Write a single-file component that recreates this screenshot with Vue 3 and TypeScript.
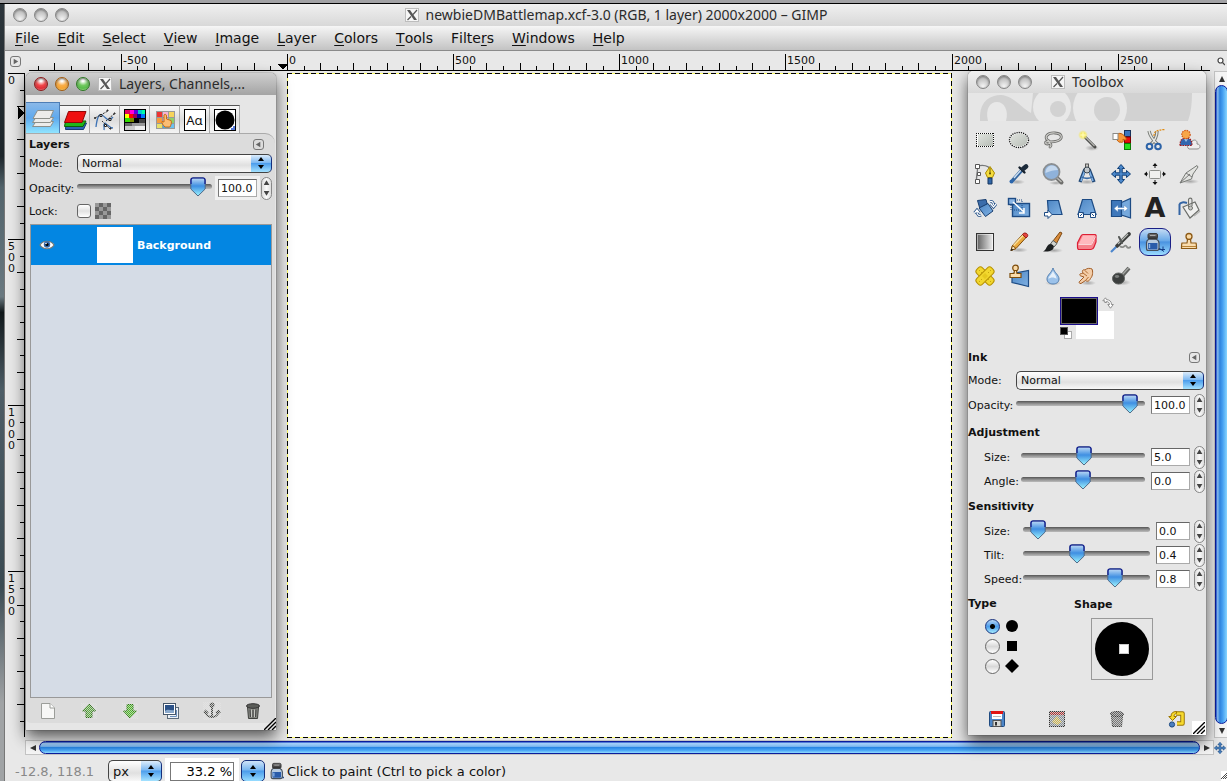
<script setup lang="ts">
import { computed, reactive, ref } from 'vue'

interface MenuEntry { before: string; key: string; after: string }
interface Tick { pos: number; size: 'major' | 'medium' | 'minor'; label: string }
interface SliderRow { id: string; label: string; text: string; position: number }

const menus: MenuEntry[] = [
  { before: '', key: 'F', after: 'ile' },
  { before: '', key: 'E', after: 'dit' },
  { before: '', key: 'S', after: 'elect' },
  { before: '', key: 'V', after: 'iew' },
  { before: '', key: 'I', after: 'mage' },
  { before: '', key: 'L', after: 'ayer' },
  { before: '', key: 'C', after: 'olors' },
  { before: '', key: 'T', after: 'ools' },
  { before: 'Filte', key: 'r', after: 's' },
  { before: '', key: 'W', after: 'indows' },
  { before: '', key: 'H', after: 'elp' },
]

const zoom = 0.3323

function makeTicks(origin: number, from: number, to: number): Tick[] {
  const ticks: Tick[] = []
  for (let unit = from; unit <= to; unit += 50) {
    const size = unit % 500 === 0 ? 'major' : unit % 100 === 0 ? 'medium' : 'minor'
    ticks.push({ pos: Math.round(origin + unit * zoom), size, label: size === 'major' ? String(unit) : '' })
  }
  return ticks
}

const horizontalTicks = computed(() => makeTicks(262, -750, 2750))
const verticalTicks = computed(() => makeTicks(2, 0, 1950))
const tickLength = { major: 17, medium: 8, minor: 5 }

const tabs = ['layers', 'channels', 'paths', 'colormap', 'palette', 'fonts', 'brushes']
const tabNames = ['Layers', 'Channels', 'Paths', 'Colormap', 'Palettes', 'Fonts', 'Brushes']
const activeTab = ref('layers')

const tools = [
  'rect-select', 'ellipse-select', 'lasso', 'wand', 'by-color', 'scissors', 'foreground',
  'path', 'picker', 'magnify', 'measure', 'move', 'align', 'crop',
  'rotate', 'scale', 'shear', 'perspective', 'flip', 'text', 'bucket',
  'gradient', 'pencil', 'brush', 'eraser', 'airbrush', 'ink', 'clone',
  'heal', 'perspective-clone', 'blur', 'smudge', 'dodge',
]
const activeTool = ref('ink')

const layerActions = ['new', 'raise', 'lower', 'duplicate', 'anchor', 'trash']
const presetActions = ['save', 'restore', 'delete', 'reset']

const layerOpacity = reactive<SliderRow>({ id: 'layer-opacity', label: 'Opacity:', text: '100.0', position: 95 })
const inkOpacity = reactive<SliderRow>({ id: 'ink-opacity', label: 'Opacity:', text: '100.0', position: 94 })
const adjustment = reactive<SliderRow[]>([
  { id: 'adjust-size', label: 'Size:', text: '5.0', position: 51 },
  { id: 'adjust-angle', label: 'Angle:', text: '0.0', position: 50 },
])
const sensitivity = reactive<SliderRow[]>([
  { id: 'sense-size', label: 'Size:', text: '0.0', position: 6 },
  { id: 'sense-tilt', label: 'Tilt:', text: '0.4', position: 41 },
  { id: 'sense-speed', label: 'Speed:', text: '0.8', position: 76 },
])

const blob = ref('circle')
const lockAlpha = ref(false)
const zoomText = ref('33.2 %')
</script>

<template>
  <svg class="sprite" aria-hidden="true">
    <defs>
      <linearGradient id="g-blue" x1="0" y1="0" x2="1" y2="1">
        <stop offset="0" stop-color="#4d86c4" /><stop offset="1" stop-color="#7fb0e2" />
      </linearGradient>
      <linearGradient id="g-gray" x1="0" y1="0" x2="1" y2="0">
        <stop offset="0" stop-color="#5c5c5c" /><stop offset="1" stop-color="#f2f2f2" />
      </linearGradient>
      <linearGradient id="g-sel" x1="0" y1="0" x2="1" y2="1">
        <stop offset="0" stop-color="#e2e5e0" /><stop offset="1" stop-color="#b6bcb5" />
      </linearGradient>
      <linearGradient id="g-ink" x1="0" y1="0" x2="0" y2="1">
        <stop offset="0" stop-color="#777" /><stop offset="1" stop-color="#2a2a2a" />
      </linearGradient>
      <radialGradient id="g-glow">
        <stop offset="0" stop-color="#fffbd0" /><stop offset=".45" stop-color="#f6ea66" /><stop offset="1" stop-color="#f6ea66" stop-opacity="0" />
      </radialGradient>
      <radialGradient id="g-shade">
        <stop offset="0" stop-color="#000" stop-opacity=".28" /><stop offset="1" stop-color="#000" stop-opacity="0" />
      </radialGradient>
      <pattern id="p-mesh" width="2" height="2" patternUnits="userSpaceOnUse">
        <rect width="1" height="1" fill="#e4e4e4" /><rect x="1" y="1" width="1" height="1" fill="#e4e4e4" />
      </pattern>
    </defs>

    <symbol id="t-rect-select" viewBox="0 0 24 24">
      <rect x="4" y="5" width="17" height="14" fill="#fff" />
      <rect x="5" y="6" width="15" height="12" fill="url(#g-sel)" />
      <path d="M3 5.500H21M3 18.500H21" stroke="#111" stroke-dasharray="1 1" />
      <path d="M3.500 5V19M20.500 5V19" stroke="#111" stroke-dasharray="1 1" />
    </symbol>
    <symbol id="t-ellipse-select" viewBox="0 0 24 24">
      <ellipse cx="12" cy="12" rx="9" ry="7" fill="url(#g-sel)" stroke="#fff" />
      <ellipse cx="12" cy="12" rx="9.500" ry="7.500" fill="none" stroke="#111" stroke-width="1.300" stroke-dasharray="1.200 1" />
    </symbol>
    <symbol id="t-lasso" viewBox="0 0 24 24">
      <g fill="none" stroke-linecap="round">
        <path d="M8 13C2 10 6 4.500 14 5C22 5.500 22 11 16 13C12 14.300 9 14 6.500 13.500C4 13.500 4 16 6.500 16C9 16 9 13 7 12.500M8 15C11 16 10 18 9 19" stroke="#6b6b69" stroke-width="2.800" />
        <path d="M8 13C2 10 6 4.500 14 5C22 5.500 22 11 16 13C12 14.300 9 14 6.500 13.500C4 13.500 4 16 6.500 16C9 16 9 13 7 12.500M8 15C11 16 10 18 9 19" stroke="#cfcfcb" stroke-width="1.200" />
      </g>
    </symbol>
    <symbol id="t-wand" viewBox="0 0 24 24">
      <ellipse cx="17" cy="20" rx="7" ry="3" fill="url(#g-shade)" />
      <path d="M10 9L20 19" stroke="#4a4b49" stroke-width="3" stroke-linecap="round" />
      <path d="M10 8.500L19.500 18" stroke="#b5b5b0" stroke-width="1.200" />
      <circle cx="8" cy="7" r="5" fill="url(#g-glow)" />
      <path d="M8 4V10M5 7H11" stroke="#fff9a8" />
    </symbol>
    <symbol id="t-by-color" viewBox="0 0 24 24">
      <rect x="15.500" y="2.500" width="6" height="6" fill="#3c76bd" stroke="#16325c" />
      <rect x="15.500" y="9" width="6" height="6" fill="#e80d0d" stroke="#7c0000" />
      <rect x="15.500" y="15.500" width="6" height="6" fill="#27e11f" stroke="#0b7a06" />
      <path d="M8 6C12 4 15 7 17 10C18 12 16 13 14 11C15 14 13 15 12 14C10 15 9 13 8 12Z" fill="#f79a3c" stroke="#bf5a08" />
      <rect x="4" y="5.500" width="5" height="6" fill="#fff" stroke="#8a8a86" />
    </symbol>
    <symbol id="t-scissors" viewBox="0 0 24 24">
      <path d="M6 3C7 8 10 12 15 17M14 3C14 8 12 13 7 17" fill="none" stroke="#777a75" stroke-width="3.400" />
      <path d="M6 3C7 8 10 12 15 17M14 3C14 8 12 13 7 17" fill="none" stroke="#e6e7e3" stroke-width="1.400" />
      <ellipse cx="6.500" cy="18.500" rx="2.800" ry="2.800" fill="#e7e7e7" stroke="#2d63a7" stroke-width="2" />
      <ellipse cx="15" cy="18.500" rx="2.800" ry="2.800" fill="#e7e7e7" stroke="#2d63a7" stroke-width="2" />
      <path d="M11 8C11 3 14 2 22 1.500" fill="none" stroke="#e08a10" stroke-dasharray="2 1" stroke-width="1.200" />
    </symbol>
    <symbol id="t-foreground" viewBox="0 0 24 24">
      <path d="M12 21C9 19 11 15 14 15C16 10 21 12 20 16C24 16 24 21 20 21Z" fill="#eee" stroke="#8d8d8d" />
      <path d="M3 17.500C3 12 5 10 9 10C13 10 15 12 15 17.500Z" fill="#3266ae" stroke="#a51818" stroke-dasharray="1.500 1" stroke-width="1.200" />
      <path d="M7 11L9 14L11 11Z" fill="#9bc0ea" />
      <circle cx="9" cy="6.500" r="4.200" fill="#f7a648" stroke="#d0591c" stroke-dasharray="1.500 1" stroke-width="1.200" />
    </symbol>
    <symbol id="t-path" viewBox="0 0 24 24">
      <path d="M4 20C2 14 6 10 4 4C9 3 16 2 18 9" fill="none" stroke="#76787a" stroke-width="1.400" />
      <path d="M2.500 2.500h4v4h-4zM2.500 17.500h4v4h-4zM4.500 10.500h3v3h-3z" fill="#fff" stroke="#555" />
      <path d="M17 4.500L21.500 11L19.500 15.500H14.500L12.500 11Z" fill="#f5dd3e" stroke="#a98a05" />
      <path d="M17 6V11" stroke="#7e6700" /><circle cx="17" cy="11.500" r="1" fill="#5a4a00" />
      <path d="M15 16h4v6h-4z" fill="#3167a8" stroke="#17375f" />
    </symbol>
    <symbol id="t-picker" viewBox="0 0 24 24">
      <ellipse cx="10" cy="20" rx="8" ry="2.500" fill="url(#g-shade)" />
      <path d="M14 9L6 18" stroke="#34669f" stroke-width="3.600" stroke-linecap="round" />
      <path d="M14 8L7 16" stroke="#cfe0f2" stroke-width="1.400" />
      <circle cx="4.500" cy="19.500" r="2" fill="#2b66ad" />
      <path d="M12.500 5.500L17.500 10.500" stroke="#15202c" stroke-width="2.400" stroke-linecap="round" />
      <path d="M16 7L19 4.500" stroke="#1c2b3b" stroke-width="4.800" stroke-linecap="round" />
    </symbol>
    <symbol id="t-magnify" viewBox="0 0 24 24">
      <ellipse cx="15" cy="21" rx="7" ry="2" fill="url(#g-shade)" />
      <path d="M16 16L20.500 20.500" stroke="#6e6e6c" stroke-width="4" stroke-linecap="round" />
      <path d="M16 16L20.500 20" stroke="#bdbdb9" stroke-width="1.400" />
      <circle cx="10.500" cy="10" r="8" fill="#8fb2da" stroke="#8b8f92" stroke-width="1.800" />
      <path d="M4.500 11C4.500 2.500 14.500 1 17 8C13 8 9 9 4.500 11Z" fill="#c4d8ee" />
    </symbol>
    <symbol id="t-measure" viewBox="0 0 24 24">
      <ellipse cx="12" cy="20" rx="9" ry="2.500" fill="url(#g-shade)" />
      <path d="M10 7L5 20M14 7L19 20" stroke="#1f4878" stroke-width="3.400" />
      <path d="M10 8L6 19M14 8L18 19" stroke="#7fb1e6" stroke-width="1.600" />
      <path d="M6 14.500C9 17 15 17 18 14.500" fill="none" stroke="#3b6ca5" stroke-width="1.600" />
      <rect x="10.500" y="2" width="3" height="4" fill="#c9c9c5" stroke="#555" />
      <circle cx="12" cy="8" r="3" fill="#c2c8cd" stroke="#39454f" />
    </symbol>
    <symbol id="t-move" viewBox="0 0 24 24">
      <path d="M12 2.500L15.500 6.500H13.200V10.800H17.500V8.500L21.500 12L17.500 15.500V13.200H13.200V17.500H15.500L12 21.500L8.500 17.500H10.800V13.200H6.500V15.500L2.500 12L6.500 8.500V10.800H10.800V6.500H8.500Z" fill="#4b88cb" stroke="#0f3f78" />
    </symbol>
    <symbol id="t-align" viewBox="0 0 24 24">
      <rect x="6.500" y="8.500" width="11" height="8" rx="1" fill="#f0f0ee" stroke="#8d8f8b" />
      <path d="M12 1L14.500 4H12.500V6H11.500V4H9.500ZM12 23L14.500 20H12.500V18H11.500V20H9.500ZM1 12L4 9.500V11.500H5V12.500H4V14.500ZM23 12L20 9.500V11.500H19V12.500H20V14.500Z" fill="#111" />
    </symbol>
    <symbol id="t-crop" viewBox="0 0 24 24">
      <ellipse cx="13" cy="19.500" rx="9" ry="2.500" fill="url(#g-shade)" />
      <path d="M3 21L9 11L20 3.500L21 5L16 12L14.500 17Z" fill="#e3e4e1" stroke="#787b77" />
      <path d="M3 21L13 12M9 11L15 15" stroke="#777" fill="none" />
    </symbol>
    <symbol id="t-rotate" viewBox="0 0 24 24">
      <path d="M4.500 4.500L13 3.500L15 11L7 13Z" fill="#3b6dab" stroke="#173d6e" />
      <path d="M6 12L15 7.500L20 15L12.500 20.500Z" fill="url(#g-blue)" stroke="#173d6e" />
      <path d="M17 5.500C19 5 20.500 6 20.500 9M23 8L20.500 11L18 8M8 19C6 20 4 19 4 16M1.500 17L4 14L6.500 17" fill="none" stroke="#1d4b84" stroke-width="2.800" />
      <path d="M17 5.500C19 5 20.500 6 20.500 9M23 8L20.500 11L18 8M8 19C6 20 4 19 4 16M1.500 17L4 14L6.500 17" fill="none" stroke="#fff" stroke-width="1.200" />
    </symbol>
    <symbol id="t-scale" viewBox="0 0 24 24">
      <rect x="5.500" y="7.500" width="17" height="13" fill="url(#g-blue)" stroke="#1d4b84" stroke-width="1.400" />
      <rect x="1.500" y="2.500" width="7" height="6" fill="#8ab5e4" stroke="#1d4b84" stroke-width="1.400" />
      <path d="M8 4H15V8M15 9V14H4V9" fill="none" stroke="#1d4b84" stroke-dasharray="1 1" />
      <path d="M6 6L17 16M17 12V17H12" fill="none" stroke="#fff" stroke-width="1.500" />
    </symbol>
    <symbol id="t-shear" viewBox="0 0 24 24">
      <path d="M6.500 4.500H17.500L21 18.500H7.500Z" fill="url(#g-blue)" stroke="#1d4b84" stroke-width="1.200" />
      <path d="M3.500 16.500H7V14L11 18.500L7 22.500V20H3.500Z" fill="#fff" stroke="#1d4b84" />
    </symbol>
    <symbol id="t-perspective" viewBox="0 0 24 24">
      <path d="M7.500 3.500H16.500L21 18.500H3Z" fill="url(#g-blue)" stroke="#1d4b84" stroke-width="1.200" />
      <path d="M3.500 16.500H8.500V21.500H3.500ZM15.500 16.500H20.500V21.500H15.500Z" fill="#fff" stroke="#1d4b84" />
      <path d="M5 20L7.500 17.500M19 20L16.500 17.500" fill="none" stroke="#1d4b84" />
    </symbol>
    <symbol id="t-flip" viewBox="0 0 24 24">
      <path d="M2.500 4.500H12.500V20.500H2.500Z" fill="#3f78bb" stroke="#1d4b84" stroke-width="1.200" />
      <path d="M12.500 6.500L21.500 2.500V22L12.500 19Z" fill="#76a9dd" stroke="#1d4b84" stroke-width="1.200" />
      <path d="M5 12.500L9 9V11.500H15V9L19 12.500L15 16V13.500H9V16Z" fill="#fff" stroke="#5a8bc4" stroke-width=".6" />
    </symbol>
    <symbol id="t-bucket" viewBox="0 0 24 24">
      <path d="M2.500 19V8.500C3 6 7 6 10 7" fill="none" stroke="#3465a4" stroke-width="2" />
      <path d="M6 11L18 6L22 14L13 22Z" fill="#f0f0ef" stroke="#6b6d69" stroke-width="1.200" />
      <path d="M11.500 11V4C11.500 1.500 15 1.500 15 4V10" fill="none" stroke="#6f716d" stroke-width="1.100" />
      <circle cx="13.500" cy="12" r="2" fill="#c5c6c3" stroke="#70736e" />
      <path d="M17 20L23 15" stroke="#b3b3b1" stroke-width="1.600" />
    </symbol>
    <symbol id="t-gradient" viewBox="0 0 24 24">
      <rect x="3.500" y="3.500" width="17" height="17" fill="url(#g-gray)" stroke="#333" />
      <rect x="4.500" y="4.500" width="15" height="15" fill="none" stroke="#fff" stroke-opacity=".5" />
    </symbol>
    <symbol id="t-pencil" viewBox="0 0 24 24">
      <ellipse cx="12" cy="20" rx="9" ry="2.500" fill="url(#g-shade)" />
      <path d="M4 20.500L5.500 15.500L16 4L19.500 7L9 18.500Z" fill="#e9a93f" stroke="#7e4a08" />
      <path d="M6.500 15.500L17 4.500" stroke="#fbe09b" stroke-width="1.400" />
      <path d="M15.500 4.500C17 1.500 22 3.500 20.500 6.500L19 8Z" fill="#e2453f" stroke="#962019" />
      <path d="M4 20.500L5.500 15.500L9 18.500Z" fill="#f3e3bd" stroke="#7e4a08" /><path d="M3.500 21L4.500 18.500L6.500 19.800Z" fill="#222" />
    </symbol>
    <symbol id="t-brush" viewBox="0 0 24 24">
      <ellipse cx="13" cy="20.500" rx="9" ry="2.500" fill="url(#g-shade)" />
      <path d="M12 11L19 2L21 3L15.500 13.500Z" fill="#d98b3a" stroke="#7b4712" />
      <path d="M9.500 14L12 10.500L16 13.500L13 17Z" fill="#d0d3cf" stroke="#5c5f5b" />
      <path d="M2 21.500C6 20 5 15 9 14C13 14 14 18 11 20C8 22 5 21.500 2 21.500Z" fill="#1c1f20" />
    </symbol>
    <symbol id="t-eraser" viewBox="0 0 24 24">
      <path d="M8 4.500H20C21 4.500 21.300 5.500 21 7V12L19 17C18.500 18.500 17.500 19.500 16 19.500H4C2.500 19.500 2.500 18.500 2.500 17V13L6 6C6.500 5 7 4.500 8 4.500Z" fill="#f6848d" stroke="#dc1f35" stroke-width="1.200" />
      <path d="M8 5.500H20L16.500 14H3.800Z" fill="#ffb9be" />
      <path d="M3.500 14.500H16.500L20.500 6.500" fill="none" stroke="#f9d6d9" />
    </symbol>
    <symbol id="t-airbrush" viewBox="0 0 24 24">
      <path d="M11 16C14 20 16 13 18 17C19 19 21 17 22 17" fill="none" stroke="#8a8c89" stroke-width="1.800" />
      <path d="M8 16L20 4" stroke="#3b3d3c" stroke-width="3.800" stroke-linecap="round" />
      <path d="M9 14L19 4" stroke="#b7bab6" stroke-width="1.300" />
      <path d="M10 7L13 13" stroke="#555856" stroke-width="2" stroke-linecap="round" />
      <path d="M2 22L7 17" stroke="#4c86cd" stroke-width="2.200" />
    </symbol>
    <symbol id="t-ink" viewBox="0 0 24 24">
      <path d="M13 19.500H22M15 17.500L21 21.500M20 16.500V20" stroke="#143d86" stroke-width="1" />
      <path d="M6 9H13C15 10 16 11.500 16 13V18C16 20 15 20.500 13.500 20.500H5.500C4 20.500 3.500 20 3.500 18V13C3.500 11.500 4 10 6 9Z" fill="#b7cbe0" stroke="#45505c" stroke-width="1.200" />
      <path d="M5 13H14.500V18C14.500 19 14 19.500 13 19.500H6.500C5.500 19.500 5 19 5 18Z" fill="#2a5caa" />
      <path d="M6.500 14V18" stroke="#8fb8e8" stroke-width="1.400" />
      <rect x="5" y="3.500" width="9.500" height="5.500" rx="1.500" fill="url(#g-ink)" stroke="#3b3b3b" />
      <path d="M7 5.500H12.500" stroke="#aaa" />
    </symbol>
    <symbol id="t-clone" viewBox="0 0 24 24">
      <circle cx="12" cy="6.500" r="3" fill="#f8d9a6" stroke="#8d5a16" stroke-width="1.300" />
      <path d="M10.500 9.500H13.500L14 13H19C19.500 14 19.500 17 19.500 18.500H4.500C4.500 17 4.500 14 5 13H10Z" fill="#f9dcae" stroke="#8d5a16" stroke-width="1.200" />
      <path d="M5 16.500H19" stroke="#b88438" />
    </symbol>
    <symbol id="t-heal" viewBox="0 0 24 24">
      <g fill="#f2d72e" stroke="#b79205">
        <rect x="1.500" y="8" width="21" height="8" rx="3" transform="rotate(45 12 12)" />
        <rect x="1.500" y="8" width="21" height="8" rx="3" transform="rotate(-45 12 12)" />
      </g>
      <path d="M9 12L12 9L15 12L12 15Z" fill="#e6c81e" />
      <path d="M6 6.500h1M8 8.500h1M17 6.500h1M15 8.500h1M6 17.500h1M8 15.500h1M17 17.500h1M15 15.500h1" stroke="#c7a710" />
    </symbol>
    <symbol id="t-perspective-clone" viewBox="0 0 24 24">
      <path d="M5 9.500L21.500 6.500V22.500L5 18.500Z" fill="url(#g-blue)" stroke="#1d4b84" stroke-width="1.200" />
      <circle cx="8.500" cy="4" r="2.800" fill="#f8d9a6" stroke="#7d4c0b" stroke-width="1.200" />
      <path d="M7.500 6.500H9.500L10 9.500H14V13.500H3V9.500H7Z" fill="#f9dcae" stroke="#7d4c0b" stroke-width="1.200" />
    </symbol>
    <symbol id="t-blur" viewBox="0 0 24 24">
      <ellipse cx="12" cy="19" rx="8" ry="2.500" fill="url(#g-shade)" />
      <path d="M12 4C13.500 9 18 11 18 15C18 18 15.500 20 12 20C8.500 20 6 18 6 15C6 11 10.500 9 12 4Z" fill="#9cc2ea" stroke="#5580b0" />
      <path d="M12 7C10.500 11 7.500 12 7.500 15C9.500 13 13.500 13 15.500 15C15.500 11 13 10 12 7Z" fill="#e6f0fa" />
    </symbol>
    <symbol id="t-smudge" viewBox="0 0 24 24">
      <ellipse cx="13" cy="19" rx="8" ry="2.500" fill="url(#g-shade)" />
      <path d="M17 5C18 7 18 12 15.500 14.500C14 18 11.500 17.500 10.500 16.500L6 19.500C4 20 3.500 18 5 17L9 13L6 12C4 11.500 4.500 9.500 6.500 9.500L8 9C6.500 7 8 5 10 6C12 4 15 4 17 5Z" fill="#f3cda8" stroke="#a25c25" />
      <path d="M10 6.500L13 9.500M8 9L12 12M10.500 16.500L13.500 13" stroke="#b06a30" fill="none" />
    </symbol>
    <symbol id="t-dodge" viewBox="0 0 24 24">
      <ellipse cx="13" cy="18.500" rx="9" ry="3" fill="url(#g-shade)" />
      <path d="M13 12L20 4" stroke="#60625f" stroke-width="4" /><path d="M13 11L19.500 4" stroke="#a5a7a4" stroke-width="1.300" />
      <ellipse cx="9.500" cy="14.500" rx="6" ry="5.500" fill="#3b3e3d" stroke="#5d605e" />
      <ellipse cx="8" cy="12.500" rx="2.200" ry="1.400" fill="#7a7d7b" />
    </symbol>

    <symbol id="b-layers" viewBox="0 0 24 24">
      <g fill="#ececea" stroke="#8c8f8a">
        <path d="M5 15.500H22.500L19.500 20.500H1.500Z" /><path d="M5 11.500H22.500L19.500 16.500H1.500Z" /><path d="M6.500 4.500H22.500L19 12.500H2Z" />
      </g>
    </symbol>
    <symbol id="b-channels" viewBox="0 0 24 24">
      <path d="M3 15H23.500L20.500 21.500H2.500Z" fill="#2d64b4" stroke="#163c75" />
      <path d="M2.500 13H23L20 18.500H1.500Z" fill="#1fb71b" stroke="#0a5f08" />
      <path d="M5.500 3.500H23L19 14.500H1.500Z" fill="#ef1010" stroke="#8f0505" />
    </symbol>
    <symbol id="b-paths" viewBox="0 0 24 24">
      <path d="M3 19C4 10 6 5 9 7C14 10 15 15 20 9M11 22C12 18 9 17 12 15C15 17 17 20 20 20" fill="none" stroke="#3f74b6" stroke-width="1.300" />
      <path d="M2 10L15 3M13 13L21 6M9 13L17 21" stroke="#333" stroke-dasharray="2 1" />
      <path d="M1.500 9.500h1v1h-1zM14 2h1v1h-1zM7 6.500h2v2h-2zM16 10.500h2v2h-2zM21 5h1v1h-1zM11.500 16.500h2v2h-2zM17 20h1v1h-1z" fill="#fff" stroke="#222" />
    </symbol>
    <symbol id="b-colormap" viewBox="0 0 24 24">
      <rect x="1" y="1" width="22" height="22" fill="#000" />
      <path d="M2 2h5v4h-5z" fill="#e10061" /><path d="M7 2h4v4h-4z" fill="#f0d" /><path d="M11 2h4v4h-4z" fill="#5a00e0" /><path d="M15 2h4v4h-4z" fill="#0cc" /><path d="M19 2h3v4h-3z" fill="#0fa" />
      <path d="M2 6h4v4h-4z" fill="#ff0" /><path d="M6 6h4v4h-4z" fill="#f00" /><path d="M10 6h4v4h-4z" fill="#905" /><path d="M14 6h4v4h-4z" fill="#009" /><path d="M18 6h4v4h-4z" fill="#07f" />
      <path d="M2 10h5v4h-5z" fill="#3d0" /><path d="M7 10h4v4h-4z" fill="#780" /><path d="M16 11h6v4h-6z" fill="#444" />
      <path d="M2 15h7v3h-7z" fill="#666" /><path d="M9 15h13v3h-13z" fill="#999" /><path d="M2 18h10v4h-10z" fill="#ccc" /><path d="M12 18h10v4h-10z" fill="#eee" />
    </symbol>
    <symbol id="b-palette" viewBox="0 0 24 24">
      <rect x="3" y="3" width="19" height="18" fill="#999" />
      <path d="M4 4h5v5h-5z" fill="#e33" /><path d="M10 4h5v5h-5z" fill="#f7b3d4" /><path d="M16 4h5v5h-5z" fill="#f7d45a" />
      <path d="M4 10h5v5h-5z" fill="#f79a3c" /><path d="M10 10h5v5h-5z" fill="#c9a0dc" /><path d="M16 10h5v5h-5z" fill="#8fd16a" />
      <path d="M4 16h5v4h-5z" fill="#e7e06a" /><path d="M10 16h5v4h-5z" fill="#4aa8e0" /><path d="M16 16h5v4h-5z" fill="#6cc0f0" />
      <path d="M11 7C12 5.500 13.500 6.500 13.500 8V11L18 12.500C19 14 18 17 17 19H12C10 17 8.500 15 9 13.500L11 14Z" fill="#fbbd74" stroke="#c76d10" />
    </symbol>
    <symbol id="b-brushes" viewBox="0 0 24 24">
      <rect x="1" y="1" width="22" height="22" fill="#000" /><rect x="2" y="2" width="20" height="20" fill="#fff" />
      <circle cx="12" cy="12" r="9.500" fill="#000" />
      <path d="M18 22V20H20V18H22V22Z" fill="#5277d8" />
    </symbol>

    <symbol id="a-new" viewBox="0 0 18 18">
      <path d="M2.500 1.500H11L15.500 6V16.500H2.500Z" fill="#f7f7f6" stroke="#9b9d99" /><path d="M11 1.500V6H15.500" fill="#fff" stroke="#9b9d99" />
    </symbol>
    <symbol id="a-raise" viewBox="0 0 18 18">
      <path d="M9 2L15.500 9H12V15.500H6V9H2.500Z" fill="#59a63d" stroke="#2c6a17" /><rect x="1" y="1" width="16" height="16" fill="url(#p-mesh)" opacity=".75" />
    </symbol>
    <symbol id="a-lower" viewBox="0 0 18 18">
      <path d="M9 16L15.500 9H12V2.500H6V9H2.500Z" fill="#4fb52a" stroke="#2c7a12" /><rect x="1" y="1" width="16" height="16" fill="url(#p-mesh)" opacity=".7" />
    </symbol>
    <symbol id="a-duplicate" viewBox="0 0 18 18">
      <rect x="5.500" y="5.500" width="11" height="11" fill="#eef2f6" stroke="#5c6b7a" />
      <rect x="1.500" y="1.500" width="12" height="11" fill="#fff" stroke="#45566a" />
      <rect x="3" y="3" width="9" height="8" fill="#2c5288" /><path d="M3 9C6 6 9 9 12 8V11H3Z" fill="#8aa9cc" />
      <path d="M8 14.500H14.500V8" fill="none" stroke="#6a8fbd" />
    </symbol>
    <symbol id="a-anchor" viewBox="0 0 18 18">
      <g fill="none" stroke="#4a4c49" stroke-width="2"><circle cx="9" cy="3" r="1.500" /><path d="M9 5V15M2.500 9C2.500 17 15.500 17 15.500 9M1 11L2.500 9L5 11M17 11L15.500 9L13 11" /></g>
      <rect width="18" height="18" fill="url(#p-mesh)" opacity=".8" />
    </symbol>
    <symbol id="a-trash" viewBox="0 0 18 18">
      <path d="M3.500 5H14.500L13.500 16.500H4.500Z" fill="#858782" stroke="#3f413e" /><ellipse cx="9" cy="4" rx="6.500" ry="2.300" fill="#5b5d59" stroke="#333" />
      <path d="M6 7.500L6.500 15M9 8V15.500M12 7.500L11.500 15" stroke="#444" /><path d="M7.500 7.500V15M10.500 7.500V15" stroke="#c4c6c1" />
    </symbol>
    <symbol id="a-save" viewBox="0 0 18 18">
      <rect x="1.500" y="1.500" width="15" height="15" rx="1" fill="#4d86c8" stroke="#1f4a80" /><rect x="4" y="3" width="10" height="6" fill="#fff" /><rect x="3" y="1" width="12" height="3" fill="#e01515" />
      <path d="M5 6.500H13" stroke="#bbb" /><rect x="5" y="10.500" width="8" height="6" fill="#d8dad7" stroke="#555" /><rect x="7" y="12" width="2" height="3.500" fill="#333" />
    </symbol>
    <symbol id="a-restore" viewBox="0 0 18 18">
      <rect x="1.500" y="1.500" width="15" height="15" fill="#858d96" stroke="#333" /><rect x="2" y="2" width="14" height="3" fill="#a33" />
      <path d="M4 12L9 6L14 12L9 15Z" fill="#c9b24d" /><rect x="1" y="1" width="16" height="16" fill="url(#p-mesh)" opacity=".8" />
    </symbol>
    <symbol id="a-delete" viewBox="0 0 18 18">
      <path d="M3.500 5H14.500L13.500 16.500H4.500Z" fill="#777" stroke="#3f413e" /><ellipse cx="9" cy="4" rx="6.500" ry="2.500" fill="#666" stroke="#333" />
      <rect x="1" y="1" width="16" height="16" fill="url(#p-mesh)" opacity=".7" />
    </symbol>
    <symbol id="a-reset" viewBox="0 0 18 18">
      <path d="M8 3.500H14.500V13.500H9" fill="none" stroke="#9a7500" stroke-width="4.500" stroke-linejoin="round" /><path d="M8 3.500H14.500V13.500H9" fill="none" stroke="#f7da2e" stroke-width="2.600" stroke-linejoin="round" />
      <path d="M8.500 1.500V3.500C6.500 4 6 5 6 6.500H8.500L4.500 10.500L.8 6.500H3C3 3 5 1.500 8.500 1.500Z" fill="#f7da2e" stroke="#9a7500" />
      <circle cx="4" cy="14.500" r="2.600" fill="#4c7fc0" stroke="#1f4a80" />
    </symbol>

    <symbol id="x-logo" viewBox="0 0 14 14">
      <rect x=".5" y=".5" width="13" height="13" fill="#f6f6f6" stroke="#bdbdbd" />
      <path d="M2 2H5L12 12H9Z" fill="#555" /><path d="M12 2L8 6.500M6 8.500L2.500 12" stroke="#555" stroke-width="1.200" />
    </symbol>
    <symbol id="grip" viewBox="0 0 12 12">
      <path d="M0 12L12 0M4 12L12 4M8 12L12 8" stroke="#000" stroke-width="1.400" />
    </symbol>
  </svg>

  <div class="desktop">
    <main class="image-window">
      <header class="titlebar main-title">
        <div class="lights"><button type="button" aria-label="Close"></button><button type="button" aria-label="Minimize"></button><button type="button" aria-label="Zoom"></button></div>
        <h1><svg class="logo"><use href="#x-logo" /></svg>newbieDMBattlemap.xcf-3.0 (RGB, 1 layer) 2000x2000 – GIMP</h1>
      </header>

      <nav class="menubar">
        <button v-for="menu in menus" :key="menu.key + menu.after" type="button">{{ menu.before }}<u>{{ menu.key }}</u>{{ menu.after }}</button>
      </nav>

      <section class="workspace">
        <div class="corner">
          <button type="button" class="mini" aria-label="Image menu"><svg viewBox="0 0 10 10"><path d="M3 2L8 5L3 8Z" /></svg></button>
        </div>
        <svg class="ruler ruler-top">
          <path d="M4 19.500H1185" />
          <g v-for="tick in horizontalTicks" :key="tick.pos">
            <line :x1="tick.pos + 0.5" :x2="tick.pos + 0.5" :y1="20 - tickLength[tick.size]" y2="20" />
            <text v-if="tick.label" :x="tick.pos + 2" y="13">{{ tick.label }}</text>
          </g>
          <path class="marker" d="M253 13H263L258 19Z" />
        </svg>
        <button type="button" class="zoom-toggle" aria-label="Zoom image with window"><svg viewBox="0 0 8 9"><circle cx="3.500" cy="3.500" r="2.500" /><path d="M5.500 5.500L8 8" /></svg></button>

        <svg class="ruler ruler-side">
          <path d="M19.500 3V666" />
          <g v-for="tick in verticalTicks" :key="tick.pos">
            <line :x1="20 - tickLength[tick.size]" x2="20" :y1="tick.pos + 0.5" :y2="tick.pos + 0.5" />
            <text v-for="(digit, row) in tick.label" :key="row" x="3" :y="tick.pos + 11 + row * 11">{{ digit }}</text>
          </g>
          <path class="marker" d="M13 36V48L19 42Z" />
        </svg>
        <div class="viewport"><div class="canvas"></div></div>
        <div class="scroll vertical">
          <button type="button" aria-label="Scroll up"><svg viewBox="0 0 8 8"><path d="M4 1L7 7H1Z" /></svg></button>
          <div class="thumb"></div>
          <button type="button" aria-label="Scroll down"><svg viewBox="0 0 8 8"><path d="M4 7L7 1H1Z" /></svg></button>
        </div>

        <div class="scroll horizontal">
          <button type="button" aria-label="Scroll left"><svg viewBox="0 0 8 8"><path d="M1 4L7 1V7Z" /></svg></button>
          <div class="thumb"></div>
          <button type="button" aria-label="Scroll right"><svg viewBox="0 0 8 8"><path d="M7 4L1 1V7Z" /></svg></button>
        </div>
        <button type="button" class="navigate" aria-label="Navigate image"><svg viewBox="2 2 20 20"><use href="#t-move" width="24" height="24" /></svg></button>
      </section>

      <footer class="status">
        <output class="coords">-12.8, 118.1</output>
        <span class="select unit"><select aria-label="Unit"><option>px</option></select><svg class="arrows" viewBox="0 0 10 14"><path d="M5 1L8 5H2ZM5 13L8 9H2Z" /></svg></span>
        <span class="zoom-box"><input v-model="zoomText" type="text" aria-label="Zoom" /></span>
        <button type="button" class="zoom-drop" aria-label="Zoom levels"><svg viewBox="0 0 10 14"><path d="M5 1L8 5H2ZM5 13L8 9H2Z" /></svg></button>
        <svg class="status-icon" viewBox="3 2 14 20"><use href="#t-ink" width="24" height="24" /></svg>
        <span>Click to paint (Ctrl to pick a color)</span>
      </footer>
      <svg class="page-grip"><use href="#grip" /></svg>
    </main>

    <aside class="dialog layers">
      <header class="titlebar">
        <div class="lights active"><button type="button" aria-label="Close"></button><button type="button" aria-label="Minimize"></button><button type="button" aria-label="Zoom"></button></div>
        <h2><svg class="logo"><use href="#x-logo" /></svg>Layers, Channels,...</h2>
      </header>
      <nav class="tabs">
        <button v-for="(tab, i) in tabs" :key="tab" type="button" :aria-label="tabNames[i]" :class="{ active: tab === activeTab }" @click="activeTab = tab">
          <span v-if="tab === 'fonts'" class="font-tab">Aα</span>
          <svg v-else><use :href="'#b-' + tab" /></svg>
        </button>
      </nav>
      <div class="panel">
        <div class="row heading"><h3>Layers</h3><button type="button" class="mini" aria-label="Configure tab"><svg viewBox="0 0 10 10"><path d="M7 2L2 5L7 8Z" /></svg></button></div>
        <div class="row mode">
          <label for="layer-mode">Mode:</label>
          <span class="select"><select id="layer-mode"><option>Normal</option></select><svg class="arrows" viewBox="0 0 10 14"><path d="M5 1L8 5H2ZM5 13L8 9H2Z" /></svg></span>
        </div>
        <div class="row">
          <label :for="layerOpacity.id">{{ layerOpacity.label }}</label>
          <input :id="layerOpacity.id" v-model.number="layerOpacity.position" type="range" />
          <input v-model="layerOpacity.text" class="number haloed" type="text" aria-label="Layer opacity" />
          <span class="spin"><button type="button" aria-label="Increase"></button><button type="button" aria-label="Decrease"></button></span>
        </div>
        <div class="row lock">
          <label for="lock-alpha">Lock:</label>
          <input id="lock-alpha" v-model="lockAlpha" type="checkbox" />
          <span class="checker"></span>
        </div>
        <ul class="layer-list">
          <li>
            <svg class="eye" viewBox="0 0 16 12"><path d="M1 6C4 1 12 1 15 6C12 11 4 11 1 6Z" fill="#fff" stroke="#7c7c76" stroke-width="1.200" /><circle cx="8" cy="5.500" r="3.200" fill="#3668a8" /><circle cx="8" cy="5.500" r="1.600" fill="#000" /><circle cx="7" cy="4.500" r=".8" fill="#fff" /></svg>
            <span class="thumbnail"></span>
            <span>Background</span>
          </li>
        </ul>
        <div class="actions">
          <button v-for="action in layerActions" :key="action" type="button" :aria-label="action"><svg><use :href="'#a-' + action" /></svg></button>
        </div>
      </div>
      <svg class="grip"><use href="#grip" /></svg>
    </aside>

    <aside class="dialog toolbox">
      <header class="titlebar">
        <div class="lights"><button type="button" aria-label="Close"></button><button type="button" aria-label="Minimize"></button><button type="button" aria-label="Zoom"></button></div>
        <h2><svg class="logo"><use href="#x-logo" /></svg>Toolbox</h2>
      </header>
      <svg class="banner" viewBox="0 0 238 28">
        <path d="M12 28V22C13 8 22 2 33 2C46 3 53 15 63 20L65 0H224C224 10 223 20 220 28Z" fill="#d2d2d2" />
        <path d="M20 28C17 16 22 9 29 9C36 9 41 17 38 28Z" fill="#e8e8e8" />
        <circle cx="84" cy="14" r="19" fill="#e8e8e8" /><circle cx="90" cy="16" r="8" fill="#d2d2d2" />
        <circle cx="132" cy="15" r="27" fill="#e8e8e8" /><circle cx="139" cy="17" r="13" fill="#d2d2d2" />
      </svg>
      <div class="tools">
        <button v-for="tool in tools" :key="tool" type="button" :aria-label="tool" :class="{ active: tool === activeTool }" @click="activeTool = tool">
          <span v-if="tool === 'text'" class="letter">A</span>
          <svg v-else><use :href="'#t-' + tool" /></svg>
        </button>
      </div>
      <div class="colors">
        <div class="swatches">
          <button type="button" class="background" aria-label="Background color"></button>
          <button type="button" class="foreground" aria-label="Foreground color"></button>
          <svg class="swap" viewBox="0 0 12 12"><path d="M3.500 .8L.8 3.800H2.800V5.500H4.500V4.500C6 4.500 7.500 5.500 7.500 7.500H5.800L8.500 11.200L11.300 7.500H9.500C9.500 4.500 7.500 2.800 4.500 2.600Z" fill="#fff" stroke="#777" stroke-width=".8" /></svg>
          <svg class="defaults" viewBox="0 0 12 12"><rect x="4.500" y="4.500" width="7" height="7" fill="#fff" stroke="#aaa" /><rect x=".5" y=".5" width="7" height="7" fill="#000" stroke="#555" /></svg>
        </div>
      </div>
      <div class="options">
        <div class="row heading"><h3>Ink</h3><button type="button" class="mini" aria-label="Configure tab"><svg viewBox="0 0 10 10"><path d="M7 2L2 5L7 8Z" /></svg></button></div>
        <div class="row mode">
          <label for="ink-mode">Mode:</label>
          <span class="select"><select id="ink-mode"><option>Normal</option></select><svg class="arrows" viewBox="0 0 10 14"><path d="M5 1L8 5H2ZM5 13L8 9H2Z" /></svg></span>
        </div>
        <div class="row">
          <label :for="inkOpacity.id">{{ inkOpacity.label }}</label>
          <input :id="inkOpacity.id" v-model.number="inkOpacity.position" type="range" />
          <input v-model="inkOpacity.text" class="number" type="text" aria-label="Ink opacity" />
          <span class="spin"><button type="button" aria-label="Increase"></button><button type="button" aria-label="Decrease"></button></span>
        </div>
        <fieldset class="adjust">
          <legend>Adjustment</legend>
          <div v-for="row in adjustment" :key="row.id" class="row">
            <label :for="row.id">{{ row.label }}</label>
            <input :id="row.id" v-model.number="row.position" type="range" />
            <input v-model="row.text" class="number" type="text" :aria-label="'Adjustment ' + row.label" />
            <span class="spin"><button type="button" aria-label="Increase"></button><button type="button" aria-label="Decrease"></button></span>
          </div>
        </fieldset>
        <fieldset class="sense">
          <legend>Sensitivity</legend>
          <div v-for="row in sensitivity" :key="row.id" class="row">
            <label :for="row.id">{{ row.label }}</label>
            <input :id="row.id" v-model.number="row.position" type="range" />
            <input v-model="row.text" class="number" type="text" :aria-label="'Sensitivity ' + row.label" />
            <span class="spin"><button type="button" aria-label="Increase"></button><button type="button" aria-label="Decrease"></button></span>
          </div>
        </fieldset>
        <div class="shape-row">
          <fieldset>
            <legend>Type</legend>
            <label v-for="kind in ['circle', 'square', 'diamond']" :key="kind" class="kind">
              <input v-model="blob" type="radio" name="blob" :value="kind" :aria-label="kind" />
              <span :class="['glyph', kind]"></span>
            </label>
          </fieldset>
          <section>
            <h3>Shape</h3>
            <div class="shape-preview"><div class="nib"><span></span></div></div>
          </section>
        </div>
      </div>
      <div class="actions">
        <button v-for="action in presetActions" :key="action" type="button" :aria-label="action"><svg><use :href="'#a-' + action" /></svg></button>
      </div>
      <svg class="grip"><use href="#grip" /></svg>
    </aside>
  </div>
</template>

<style>
html, body { margin: 0; overflow: hidden; }
</style>

<style scoped>
* { box-sizing: border-box; }
button { margin: 0; padding: 0; border: 0; background: none; font: inherit; color: inherit; }
h1, h2, h3, ul, fieldset, legend { margin: 0; padding: 0; border: 0; font-size: inherit; }
fieldset { min-width: 0; }
svg { display: block; flex: none; }
.sprite { position: absolute; width: 0; height: 0; }

.desktop {
  position: relative;
  height: 100vh;
  padding: 4px 0 0 4px;
  overflow: hidden;
  background: linear-gradient(#a2a2a5 0 3px, #000 3px 4px, transparent 4px),
    linear-gradient(#2d363c, #1d262b 20%, #52636b 24%, #6a7980 38%, #10171a 40%, #4d5d66 50%, #3a4a52 75%, #a0a3a5 90%);
  font: 11px "DejaVu Sans", sans-serif;
  color: #111;
}
.image-window { position: relative; display: flex; flex-direction: column; height: 100%; border-left: 1px solid #777; background: #e8e8e8; }

.titlebar { display: grid; grid-template-columns: 58px 1fr; align-items: center; }
.titlebar h1, .titlebar h2 { display: flex; align-items: center; font: 14px/20px "Noto Sans", sans-serif; color: #2b2b2b; white-space: nowrap; }
.logo { width: 14px; height: 14px; margin-right: 7px; }
.main-title { height: 22px; padding: 0 8px; grid-template-columns: 1fr auto 1fr; background: linear-gradient(#f0f0f0, #d8d8d8); }
.lights { display: flex; gap: 7px; }
.lights button { width: 14px; height: 14px; border: 1px solid #858585; border-radius: 50%; background: radial-gradient(circle at 50% 85%, #f4f4f4 0, #cfcfcf 45%, #aaa 100%); box-shadow: inset 0 1px 2px #777; }
.lights.active button:nth-child(1) { border-color: #8c1a1a; background: radial-gradient(circle at 50% 20%, #fff 0 10%, #f0484a 45%, #e02c36 70%, #ffadad 100%); }
.lights.active button:nth-child(2) { border-color: #a45d10; background: radial-gradient(circle at 50% 20%, #fff 0 10%, #f9ae4a 45%, #f7a430 70%, #fff09a 100%); }
.lights.active button:nth-child(3) { border-color: #2d7a23; background: radial-gradient(circle at 50% 20%, #fff 0 10%, #72c960 45%, #56bd48 70%, #d3ffb5 100%); }

.menubar { display: flex; gap: 18px; height: 25px; padding: 0 10px; align-items: center; border-bottom: 1px solid #8a8a8a; background: linear-gradient(#f6f6f6, #c3c3c3); font-size: 14px; font-kerning: none; white-space: nowrap; }
.menubar u { text-underline-offset: 2px; }

.workspace { flex: 1; min-height: 0; display: grid; grid-template: 20px 1fr 15px / 20px 1fr 13px; }
.corner { display: flex; align-items: center; justify-content: center; }
.mini { width: 11px; height: 11px; border: 1px solid #777; border-radius: 3px; }
.mini svg { width: 9px; height: 9px; }
.mini path { fill: #666; }
.ruler { width: 100%; height: 100%; min-width: 0; overflow: hidden; stroke: #000; fill: none; shape-rendering: crispEdges; }
.ruler text { stroke: none; fill: #111; font-size: 11px; }
.ruler .marker { fill: #000; stroke: none; }
.zoom-toggle { display: grid; place-items: center; }
.zoom-toggle svg { width: 8px; height: 9px; fill: #fff; stroke: #444; stroke-width: 1.2; }
.viewport { min-width: 0; min-height: 0; overflow: hidden; background: #e8e8e8; padding: 2px 0 2px 262px; }
.canvas {
  width: 665px;
  height: 100%;
  background:
    repeating-linear-gradient(90deg, #000 0 5px, #ffff66 5px 8px) 0 0 / 100% 1px no-repeat,
    repeating-linear-gradient(90deg, #000 0 5px, #ffff66 5px 8px) 0 100% / 100% 1px no-repeat,
    repeating-linear-gradient(#000 0 5px, #ffff66 5px 8px) 0 0 / 1px 100% no-repeat,
    repeating-linear-gradient(#000 0 5px, #ffff66 5px 8px) 100% 0 / 1px 100% no-repeat,
    #fff;
}
.scroll { display: flex; background: #f5f5f5; border: 1px solid #c4c4c4; }
.scroll button { flex: none; display: grid; place-items: center; width: 13px; height: 13px; }
.scroll svg { width: 8px; height: 8px; fill: #333; }
.scroll .thumb { flex: 1; border: 1px solid #0b1c9c; border-radius: 7px; }
.vertical { flex-direction: column; width: 14px; margin-bottom: 2px; }
.vertical .thumb { width: 13px; background: linear-gradient(90deg, #1c4fd0, #8cc0f5 15%, #2f86e2 35%, #46a0f2 60%, #86d4ff); }
.horizontal { grid-column: 1 / 3; margin-left: 20px; }
.horizontal .thumb { background: linear-gradient(#2a52c8, #a5d0f8 14%, #7db8f2 40%, #2a86e4 50%, #48a4f6 75%, #8fdcff); }
.navigate svg { width: 12px; height: 14px; }

.status { display: flex; align-items: center; height: 26px; padding-top: 6px; margin-left: 10px; font-size: 13px; white-space: nowrap; }
.status > * { flex: none; }
.coords { width: 93px; color: #888; }
.status .unit { flex: none; width: 54px; height: 22px; margin-right: 3px; }
.zoom-box { height: 26px; padding: 4px 5px 0; background: #fff; }
.zoom-box input { width: 64px; height: 19px; padding: 0 1px; border: 1px solid #777; font: 13px "DejaVu Sans", sans-serif; text-align: right; }
.zoom-drop { display: grid; place-items: center; width: 24px; height: 22px; margin: 0 5px 0 2px; border: 1px solid #16307c; border-radius: 5px; background: linear-gradient(#cfe3f8, #78b6f0 45%, #4a9bea 50%, #96dcff); }
.zoom-drop svg { width: 10px; height: 14px; }
.status-icon { width: 14px; height: 18px; margin-right: 3px; }
.page-grip { position: absolute; right: 0; bottom: 0; width: 6px; height: 10px; background: #fff; }

.dialog { position: absolute; display: flex; flex-direction: column; background: #e6e6e6; border-radius: 5px 5px 0 0; box-shadow: 0 0 1px #000, 0 7px 16px rgba(0, 0, 0, .65); }
.dialog .titlebar { border-radius: 5px 5px 0 0; }
.grip { position: absolute; right: 0; bottom: 0; width: 12px; height: 12px; }

.layers { left: 26px; top: 73px; width: 250px; height: 657px; }
.layers .titlebar { height: 22px; grid-template-columns: 64px 1fr; padding-left: 8px; background: linear-gradient(#cfcfcf, #a4a4a4); }
.tabs { display: flex; align-items: flex-end; height: 38px; }
.tabs button { display: grid; place-items: center; width: 30px; height: 28px; border-top: 1px solid #555; border-right: 1px solid #aaa; background: linear-gradient(#f8f8f8, #dcdcdc 50%, #f4f4f4); }
.tabs button.active { width: 34px; height: 31px; background: linear-gradient(#8ab8e8, #5ea9ee 50%, #90e4ff); border-color: #4d7db5; }
.tabs svg { width: 24px; height: 24px; }
.font-tab { width: 22px; height: 22px; border: 1px solid #000; background: #fff; font: 13px/20px "Noto Sans", sans-serif; }
.panel { flex: 1; display: flex; flex-direction: column; margin: 0 1px 7px 0; padding: 1px 3px 0; border-top: 1px solid #aaa; border-radius: 0 10px 5px 5px; background: #dcdcdc; }

.row { display: flex; align-items: center; height: 24px; }
.row label { flex: none; width: 48px; white-space: nowrap; }
.heading { height: 18px; justify-content: space-between; padding-right: 8px; }
h3, legend { font-weight: bold; }
.panel .mode { height: 20px; margin-bottom: 3px; }
.panel .lock { height: 22px; margin-bottom: 2px; }
.select { position: relative; flex: 1; display: flex; height: 19px; }
.select select { appearance: none; width: 100%; margin: 0; padding: 0 4px; border: 1px solid #444; border-radius: 5px; font: inherit; color: #111; background: linear-gradient(#dcecfb, #7eb9f2 45%, #4d9eec 50%, #a4e2ff) 100% 0 / 20px 100% no-repeat, linear-gradient(#fff, #e0e0e0 60%, #f8f8f8); border-right-color: #16307c; }
.arrows { position: absolute; right: 6px; top: 50%; width: 10px; height: 14px; margin-top: -7px; pointer-events: none; }

input[type="range"] { appearance: none; flex: 1; min-width: 0; height: 20px; margin: 0 0 3px; background: none; }
input[type="range"]::-webkit-slider-runnable-track { height: 5px; border-radius: 3px; background: linear-gradient(#555, #999 60%, #bbb); }
input[type="range"]::-webkit-slider-thumb {
  appearance: none;
  width: 16px;
  height: 20px;
  margin-top: -7px;
  background: url("data:image/svg+xml,%3Csvg xmlns='http://www.w3.org/2000/svg' viewBox='0 0 16 20'%3E%3ClinearGradient id='a' x2='0' y2='1'%3E%3Cstop stop-color='%23c2dcf6'/%3E%3Cstop offset='.45' stop-color='%233f8fe2'/%3E%3Cstop offset='1' stop-color='%239ef6ff'/%3E%3C/linearGradient%3E%3Cpath d='M3 .8H13Q15.200.8 15.200 3V12L8 19L.8 12V3Q.8.8 3 .8Z' fill='url(%23a)' stroke='%23506a88'/%3E%3Cpath d='M1 7V3Q1 1 3 1H13Q15 1 15 3V7' fill='none' stroke='%230b1590' stroke-width='1.200'/%3E%3C/svg%3E") no-repeat;
}
.number { flex: none; width: 39px; height: 18px; margin: 0 4px 0 6px; padding: 0 2px; border: 1px solid #777; border-color: #666 #aaa #aaa #777; background: #fff; font: 11px "DejaVu Sans", sans-serif; color: #111; }
.haloed { box-shadow: 0 0 0 3px #f0f0f0; }
.spin { flex: none; display: flex; flex-direction: column; width: 11px; height: 23px; border: 1px solid #888; border-radius: 6px; background: linear-gradient(90deg, #ddd, #fafafa 50%, #ddd); }
.spin button { flex: 1; display: grid; place-items: center; }
.spin button::before { content: ""; width: 6px; height: 5px; background: #444; clip-path: polygon(50% 0, 100% 100%, 0 100%); }
.spin button:last-child::before { clip-path: polygon(0 0, 100% 0, 50% 100%); }
input[type="checkbox"] { appearance: none; width: 14px; height: 14px; margin: 0 4px 0 0; border: 1px solid #666; border-radius: 3px; background: linear-gradient(#fff, #e2e2e2 50%, #fff); }
.checker { width: 16px; height: 16px; background: repeating-conic-gradient(#666 0 25%, #999 0 50%) 0 0 / 8px 8px; }

.layer-list { flex: 1; list-style: none; margin: 0 0 0 1px; border: 1px solid #999; background: #d5dce6; }
.layer-list li { display: flex; align-items: center; gap: 4px; height: 40px; background: #0386e2; color: #fff; font-weight: bold; }
.eye { width: 16px; height: 12px; margin: 0 38px 0 8px; }
.thumbnail { width: 36px; height: 36px; background: #fff; }
.actions { display: flex; justify-content: space-between; align-items: center; }
.actions svg { width: 18px; height: 18px; }
.panel .actions { height: 25px; padding: 0 10px; }

.toolbox { right: 21px; top: 71px; width: 238px; height: 664px; }
.toolbox .titlebar { height: 22px; grid-template-columns: 75px 1fr; padding-left: 8px; background: linear-gradient(#f0f0f0, #d9d9d9); }
.banner { width: 100%; height: 28px; }
.tools { display: grid; grid-template-columns: repeat(7, 1fr); grid-auto-rows: 34px; padding-top: 2px; }
.tools button { display: grid; place-items: center; width: 32px; height: 28px; margin: 3px 1px; border: 1px solid transparent; }
.tools button.active { border-color: #1a1f86; border-radius: 9px; background: linear-gradient(#c3dbf3, #69a9e8 45%, #4a93e0 50%, #9bdcff); }
.tools svg { width: 24px; height: 24px; }
.letter { font: bold 27px/24px "DejaVu Sans", sans-serif; color: #222; }
.colors { height: 52px; padding: 4px 0 0 92px; }
.swatches { position: relative; width: 54px; height: 42px; }
.swatches > * { position: absolute; }
.foreground { left: 0; top: 0; width: 38px; height: 28px; border: 1px solid #1a0d8c; background: #000; box-shadow: inset 0 0 0 1px #666; }
.background { right: 0; bottom: 0; width: 38px; height: 28px; background: #fff; }
.swap { right: 0; top: 0; width: 12px; height: 12px; }
.defaults { left: 0; bottom: 0; width: 12px; height: 12px; }
.options { flex: 1; }
.options .heading { height: 24px; padding-right: 6px; }
.options .mode { height: 22px; padding-right: 2px; margin-bottom: 2px; }
.options .row:not(.heading):not(.mode) { padding-right: 1px; }
legend { display: flex; align-items: center; height: 26px; }
.adjust label { width: 53px; padding-left: 16px; }
.sense label { width: 55px; padding-left: 16px; }
.sense .number { width: 34px; }
.adjust { margin-top: 2px; }
.shape-row { display: grid; grid-template-columns: 106px 1fr; }
.shape-row h3 { height: 27px; line-height: 27px; }
.shape-row legend { height: 25px; }
.kind { display: flex; align-items: center; gap: 6px; height: 20px; padding-left: 17px; }
input[type="radio"] { appearance: none; width: 15px; height: 15px; margin: 0; border: 1px solid #666; border-radius: 50%; background: linear-gradient(#fff, #d8d8d8 50%, #fff); }
input[type="radio"]:checked { border-color: #16307c; background: radial-gradient(circle, #000 0 2px, transparent 3px), linear-gradient(#b5d5f6, #4b9bea 50%, #a5ecff); }
.glyph { width: 12px; height: 12px; background: #000; }
.square { width: 10px; height: 10px; margin-left: 1px; }
.circle { border-radius: 50%; }
.diamond { width: 14px; height: 14px; margin-left: -1px; clip-path: polygon(50% 0, 100% 50%, 50% 100%, 0 50%); }
.shape-preview { display: grid; place-items: center; width: 62px; height: 62px; margin-left: 17px; border: 1px solid #999; }
.nib { display: grid; place-items: center; width: 54px; height: 54px; border-radius: 50%; background: #000; }
.nib span { width: 10px; height: 10px; margin-left: 4px; background: #fff; border: 1px solid #ccc; }
.toolbox .actions { height: 32px; padding: 0 20px; }
.toolbox .grip { background: #fff; padding: 1px; width: 14px; height: 14px; }
</style>
